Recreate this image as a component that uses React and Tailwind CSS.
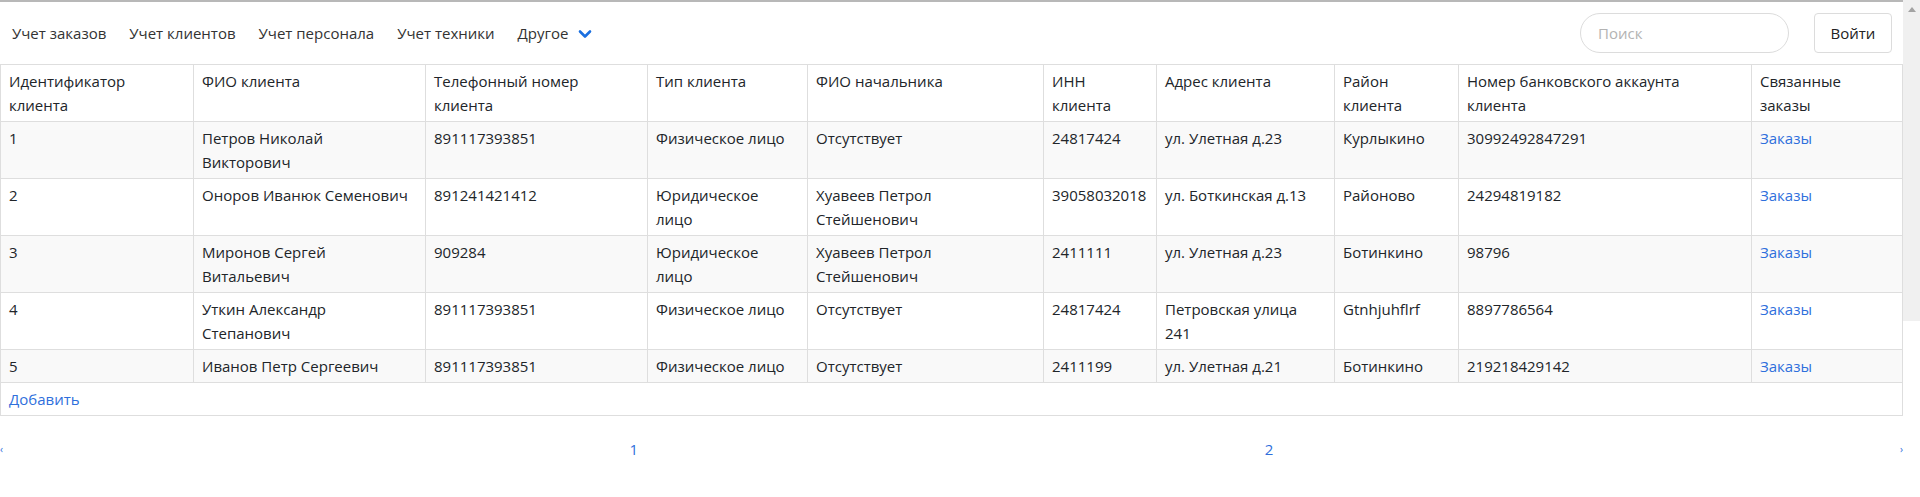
import React from 'react';

const headers = [
  'Идентификатор\nклиента',
  'ФИО клиента',
  'Телефонный номер\nклиента',
  'Тип клиента',
  'ФИО начальника',
  'ИНН\nклиента',
  'Адрес клиента',
  'Район\nклиента',
  'Номер банковского аккаунта\nклиента',
  'Связанные\nзаказы',
];

const widths = [193, 232, 222, 160, 236, 113, 178, 124, 293, 151];

const clients = [
  ['1', 'Петров Николай\nВикторович', '891117393851', 'Физическое лицо', 'Отсутствует', '24817424', 'ул. Улетная д.23', 'Курлыкино', '30992492847291'],
  ['2', 'Оноров Иванюк Семенович', '891241421412', 'Юридическое\nлицо', 'Хуавеев Петрол\nСтейшенович', '39058032018', 'ул. Боткинская д.13', 'Районово', '24294819182'],
  ['3', 'Миронов Сергей\nВитальевич', '909284', 'Юридическое\nлицо', 'Хуавеев Петрол\nСтейшенович', '2411111', 'ул. Улетная д.23', 'Ботинкино', '98796'],
  ['4', 'Уткин Александр\nСтепанович', '891117393851', 'Физическое лицо', 'Отсутствует', '24817424', 'Петровская улица\n241', 'Gtnhjuhflrf', '8897786564'],
  ['5', 'Иванов Петр Сергеевич', '891117393851', 'Физическое лицо', 'Отсутствует', '2411199', 'ул. Улетная д.21', 'Ботинкино', '219218429142'],
];

const navItems = ['Учет заказов', 'Учет клиентов', 'Учет персонала', 'Учет техники'];

export default function App() {
  return (
    <div className="flex w-full bg-white text-[15px] leading-6 text-[#212529]" style={{ fontFamily: '"Open Sans", "Noto Sans", sans-serif' }}>
      <main className="min-w-0 flex-1 border-t-2 border-[#b8b8b8]">
        {/* navbar */}
        <nav className="flex h-[62px] items-center justify-between pl-3 pr-[11px]">
          <div className="flex items-center gap-[23px] text-[#333]">
            {navItems.map(item => (
              <a key={item} className="cursor-pointer">{item}</a>
            ))}
            <a className="flex cursor-pointer items-center gap-[10px]">
              Другое
              <svg width="14" height="10" viewBox="0 0 14 10" className="mt-[1px]">
                <path d="M2 2.5 L7 7.5 L12 2.5" fill="none" stroke="#1a6fe0" strokeWidth="2.6" strokeLinecap="round" strokeLinejoin="round" />
              </svg>
            </a>
          </div>
          <div className="flex items-center gap-[25px]">
            <input
              placeholder="Поиск"
              className="h-10 w-[209px] rounded-full border border-[#dcdcdc] px-[17px] text-[15px] outline-none placeholder:text-[#b3b3b3]"
            />
            <button className="h-10 w-[78px] rounded-[4px] border border-[#dcdcdc] bg-white text-[#222]">Войти</button>
          </div>
        </nav>

        {/* table */}
        <table className="w-full table-fixed border-collapse">
          <colgroup>
            {widths.map((w, i) => (
              <col key={i} style={{ width: w }} />
            ))}
          </colgroup>
          <thead>
            <tr>
              {headers.map(h => (
                <th key={h} className="whitespace-pre border border-[#dedede] px-2 py-1 text-left align-top font-normal">
                  {h}
                </th>
              ))}
            </tr>
          </thead>
          <tbody>
            {clients.map((row, idx) => (
              <tr key={row[0]} className={idx % 2 === 0 ? 'bg-[#f9f9f9]' : 'bg-white'}>
                {row.map((cell, i) => (
                  <td key={i} className="whitespace-pre border border-[#dedede] px-2 py-1 align-top">
                    {cell}
                  </td>
                ))}
                <td className="border border-[#dedede] px-2 py-1 align-top">
                  <a className="cursor-pointer text-[#2f6fdc]">Заказы</a>
                </td>
              </tr>
            ))}
            <tr>
              <td colSpan={10} className="border border-[#dedede] px-2 py-1">
                <a className="cursor-pointer text-[#2f6fdc]">Добавить</a>
              </td>
            </tr>
          </tbody>
        </table>

        {/* pagination */}
        <div className="mt-[21px] flex items-center justify-between text-[#2f6fdc]">
          <span className="text-[10px] leading-6">‹</span>
          <span>1</span>
          <span>2</span>
          <span className="text-[10px] leading-6">›</span>
        </div>
      </main>

      {/* scrollbar */}
      <aside className="flex h-[321px] w-[17px] shrink-0 justify-center bg-[#f0f0f0] pt-[7px]">
        <svg width="8" height="5" viewBox="0 0 8 5">
          <path d="M0 5 L4 0 L8 5 Z" fill="#a3a3a3" />
        </svg>
      </aside>
    </div>
  );
}
